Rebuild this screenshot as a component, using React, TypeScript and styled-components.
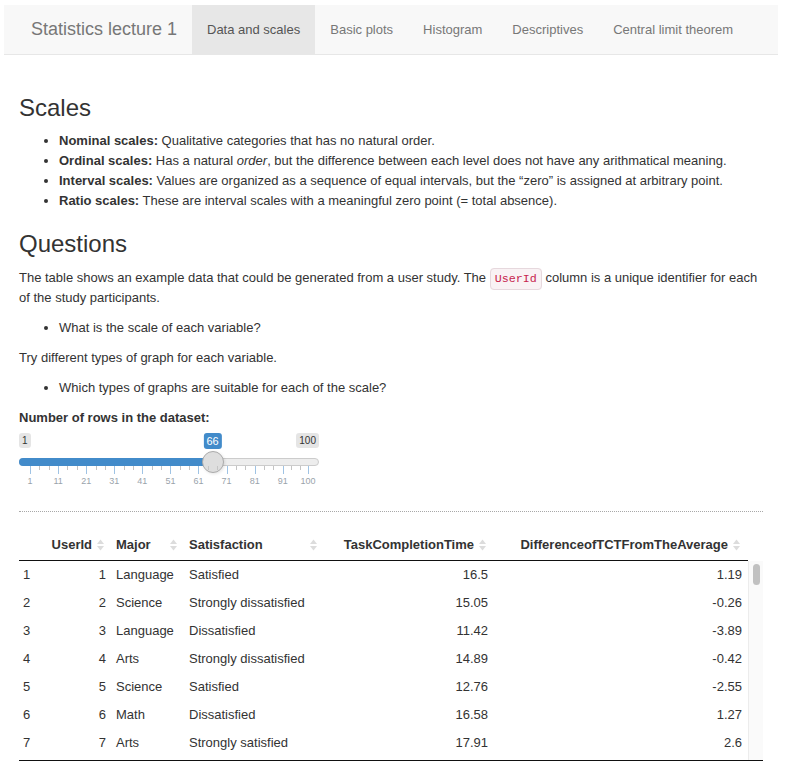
import React from "react";
import styled, { createGlobalStyle } from "styled-components";

const GlobalStyle = createGlobalStyle`
  html, body { margin: 0; padding: 0; background: #fff; }
  body {
    font-family: "Liberation Sans", Arial, sans-serif;
    font-size: 13px;
    line-height: 20px;
    color: #333;
  }
  * { box-sizing: border-box; }
`;

const Page = styled.div`
  width: 774px;
  margin-left: 4px;
  padding-top: 5px;
`;

const Navbar = styled.nav`
  display: flex;
  height: 50px;
  background: #f8f8f8;
  border-bottom: 1px solid #e7e7e7;
`;

const Brand = styled.div`
  width: 188px;
  padding-left: 27px;
  font-size: 18px;
  line-height: 49px;
  color: #777;
  white-space: nowrap;
`;

const NavLink = styled.a<{ $active?: boolean }>`
  display: block;
  padding: 0 15px;
  line-height: 49px;
  font-size: 13px;
  color: ${(p) => (p.$active ? "#555" : "#777")};
  background: ${(p) => (p.$active ? "#e7e7e7" : "transparent")};
  text-decoration: none;
  white-space: nowrap;
`;

const Content = styled.main`
  display: flow-root;
  padding: 20px 15px 0;
`;

const H3 = styled.h3`
  margin: 20px 0 10px;
  font-size: 24px;
  line-height: 1.1;
  font-weight: 500;
  color: #333;
`;

const List = styled.ul`
  margin: 0 0 10px;
  padding-left: 40px;
`;

const P = styled.p`
  margin: 0 0 10px;
`;

const Code = styled.code`
  font-family: "Liberation Mono", "DejaVu Sans Mono", monospace;
  font-size: 90%;
  line-height: 1;
  padding: 3px 4px;
  color: #c7254e;
  background: #f9f2f4;
  border: 1px solid #e6d8dd;
  border-radius: 4px;
`;

/* ---------- slider ---------- */

const SliderBlock = styled.div`
  width: 300px;
`;

const SliderLabel = styled.label`
  display: inline-block;
  margin-bottom: 5px;
  font-weight: bold;
`;

const Irs = styled.div`
  position: relative;
  height: 60px;
`;

const EdgeLabels = styled.div`
  display: flex;
  justify-content: space-between;
`;

const EdgeLabel = styled.span`
  font-size: 10px;
  line-height: 13px;
  padding: 1px 3px;
  color: #333;
  background: rgba(0, 0, 0, 0.1);
  border-radius: 3px;
`;

const SingleLabel = styled.span`
  position: absolute;
  top: 0;
  transform: translateX(-50%);
  font-size: 11px;
  line-height: 14px;
  padding: 1px 3px;
  color: #fff;
  background: #428bca;
  border-radius: 3px;
`;

const Track = styled.div`
  position: absolute;
  top: 25px;
  left: 0;
  width: 300px;
  height: 8px;
  background: #ededed;
  border: 1px solid #cccccc;
  border-radius: 16px;
`;

const Bar = styled.div`
  position: absolute;
  top: 25px;
  left: 0;
  height: 8px;
  background: #428bca;
  border-radius: 16px 0 0 16px;
`;

const Handle = styled.div`
  position: absolute;
  top: 18px;
  width: 22px;
  height: 22px;
  border-radius: 50%;
  background: #dedede;
  border: 1px solid #ababab;
  box-shadow: 1px 1px 3px rgba(0, 0, 0, 0.1);
`;

const Grid = styled.div`
  position: absolute;
  top: 33px;
  left: 11px;
  width: 278px;
  height: 27px;
`;

const Tick = styled.span<{ $big?: boolean }>`
  position: absolute;
  top: 0;
  width: 1px;
  height: ${(p) => (p.$big ? "8px" : "4px")};
  background: ${(p) => (p.$big ? "#9fc3e4" : "#c4c4c4")};
`;

const TickText = styled.span`
  position: absolute;
  top: 9px;
  transform: translateX(-50%);
  font-size: 9px;
  line-height: 12px;
  color: #9aa3ab;
  white-space: nowrap;
`;

const Divider = styled.hr`
  margin: 18px 0 15px;
  border: 0;
  border-top: 1px dotted #a8a8a8;
`;

/* ---------- table ---------- */

const COLS = "29px 64px 73px 140px 169px 254px";

const HeadRow = styled.div`
  display: grid;
  grid-template-columns: ${COLS};
  width: 729px;
  border-bottom: 1px solid #111;
`;

const Th = styled.div<{ $right?: boolean }>`
  display: flex;
  align-items: center;
  justify-content: ${(p) => (p.$right ? "flex-end" : "space-between")};
  gap: 5px;
  height: 33px;
  padding: 4px 8px 0 4px;
  font-weight: bold;
  white-space: nowrap;
`;

const BodyWrap = styled.div`
  display: flex;
  border-bottom: 1px solid #111;
`;

const Viewport = styled.div`
  width: 729px;
  height: 199px;
  overflow: hidden;
`;

const Row = styled.div`
  display: grid;
  grid-template-columns: ${COLS};
  height: 28px;
`;

const Td = styled.div<{ $right?: boolean }>`
  padding: 4px ${(p) => (p.$right ? "6px" : "4px")} 4px 4px;
  text-align: ${(p) => (p.$right ? "right" : "left")};
  white-space: nowrap;
  overflow: hidden;
`;

const ScrollTrack = styled.div`
  width: 15px;
  background: #fafafa;
  border-left: 1px solid #ececec;
  padding: 3px 3px 0 4px;
`;

const Thumb = styled.div`
  width: 7px;
  background: #c1c1c1;
  border-radius: 4px;
`;

const SortIcon = () => (
  <svg width="7" height="12" viewBox="0 0 7 12" style={{ flex: "none" }}>
    <polygon points="0,5 3.5,0.5 7,5" fill="#dcdcdc" />
    <polygon points="0,7 3.5,11.5 7,7" fill="#dcdcdc" />
  </svg>
);

/* ---------- data ---------- */

const known: [string, string, number][] = [
  ["Language", "Satisfied", 16.5],
  ["Science", "Strongly dissatisfied", 15.05],
  ["Language", "Dissatisfied", 11.42],
  ["Arts", "Strongly dissatisfied", 14.89],
  ["Science", "Satisfied", 12.76],
  ["Math", "Dissatisfied", 16.58],
  ["Arts", "Strongly satisfied", 17.91],
];
const majors = ["Language", "Science", "Arts", "Math"];
const sats = ["Strongly dissatisfied", "Dissatisfied", "Satisfied", "Strongly satisfied"];

let seed = 17;
const rnd = () => {
  seed = (seed * 9301 + 49297) % 233280;
  return seed / 233280;
};

const N = 66;
const rows = Array.from({ length: N }, (_, i) => {
  const k = known[i];
  const major = k ? k[0] : majors[Math.floor(rnd() * 4)];
  const sat = k ? k[1] : sats[Math.floor(rnd() * 4)];
  const tct = k ? k[2] : Math.round((11 + rnd() * 8) * 100) / 100;
  const diff = Number((tct - 15.31).toFixed(2));
  return { id: i + 1, major, sat, tct: String(tct), diff: String(diff) };
});

/* ---------- slider geometry ---------- */

const MIN = 1;
const MAX = 100;
const VALUE = 66;
const GRID_W = 278;
const pct = (VALUE - MIN) / (MAX - MIN);
const handleCenter = 11 + pct * GRID_W;

const nTicks = 9.9;
const bigW = 100 / nTicks;
const bigs: number[] = [];
for (let i = 0; i < nTicks + 1; i++) bigs.push(Math.min(bigW * i, 100));
const smalls: number[] = [];
bigs.forEach((b, i) => {
  if (i === 0) return;
  const w = (b - bigs[i - 1]) / 3;
  smalls.push(b - w, b - 2 * w);
});

const navItems = ["Data and scales", "Basic plots", "Histogram", "Descriptives", "Central limit theorem"];

export default function App() {
  const thumbH = (199 * 199) / (N * 28);
  return (
    <Page>
      <GlobalStyle />
      <Navbar>
        <Brand>Statistics lecture 1</Brand>
        {navItems.map((t, i) => (
          <NavLink key={t} $active={i === 0}>
            {t}
          </NavLink>
        ))}
      </Navbar>
      <Content>
        <H3>Scales</H3>
        <List>
          <li>
            <strong>Nominal scales:</strong> Qualitative categories that has no natural order.
          </li>
          <li>
            <strong>Ordinal scales:</strong> Has a natural <em>order</em>, but the difference between each level
            does not have any arithmatical meaning.
          </li>
          <li>
            <strong>Interval scales:</strong> Values are organized as a sequence of equal intervals, but the “zero”
            is assigned at arbitrary point.
          </li>
          <li>
            <strong>Ratio scales:</strong> These are interval scales with a meaningful zero point (= total absence).
          </li>
        </List>
        <H3>Questions</H3>
        <P>
          The table shows an example data that could be generated from a user study. The <Code>UserId</Code> column
          is a unique identifier for each of the study participants.
        </P>
        <List>
          <li>What is the scale of each variable?</li>
        </List>
        <P>Try different types of graph for each variable.</P>
        <List>
          <li>Which types of graphs are suitable for each of the scale?</li>
        </List>

        <SliderBlock>
          <SliderLabel>Number of rows in the dataset:</SliderLabel>
          <Irs>
            <EdgeLabels>
              <EdgeLabel>1</EdgeLabel>
              <EdgeLabel>100</EdgeLabel>
            </EdgeLabels>
            <SingleLabel style={{ left: handleCenter }}>{VALUE}</SingleLabel>
            <Track />
            <Bar style={{ width: handleCenter }} />
            <Handle style={{ left: handleCenter - 11 }} />
            <Grid>
              {smalls.map((s, i) => (
                <Tick key={"s" + i} style={{ left: `${s}%` }} />
              ))}
              {bigs.map((b, i) => (
                <React.Fragment key={"b" + i}>
                  <Tick $big style={{ left: `${b}%` }} />
                  <TickText style={{ left: `${b}%` }}>{Math.round(MIN + ((MAX - MIN) * b) / 100)}</TickText>
                </React.Fragment>
              ))}
            </Grid>
          </Irs>
        </SliderBlock>

        <Divider />

        <HeadRow>
          <Th />
          <Th $right>
            UserId
            <SortIcon />
          </Th>
          <Th>
            Major
            <SortIcon />
          </Th>
          <Th>
            Satisfaction
            <SortIcon />
          </Th>
          <Th $right>
            TaskCompletionTime
            <SortIcon />
          </Th>
          <Th $right>
            DifferenceofTCTFromTheAverage
            <SortIcon />
          </Th>
        </HeadRow>
        <BodyWrap>
          <Viewport>
            {rows.map((r) => (
              <Row key={r.id}>
                <Td>{r.id}</Td>
                <Td $right>{r.id}</Td>
                <Td>{r.major}</Td>
                <Td>{r.sat}</Td>
                <Td $right>{r.tct}</Td>
                <Td $right>{r.diff}</Td>
              </Row>
            ))}
          </Viewport>
          <ScrollTrack>
            <Thumb style={{ height: thumbH }} />
          </ScrollTrack>
        </BodyWrap>
      </Content>
    </Page>
  );
}
